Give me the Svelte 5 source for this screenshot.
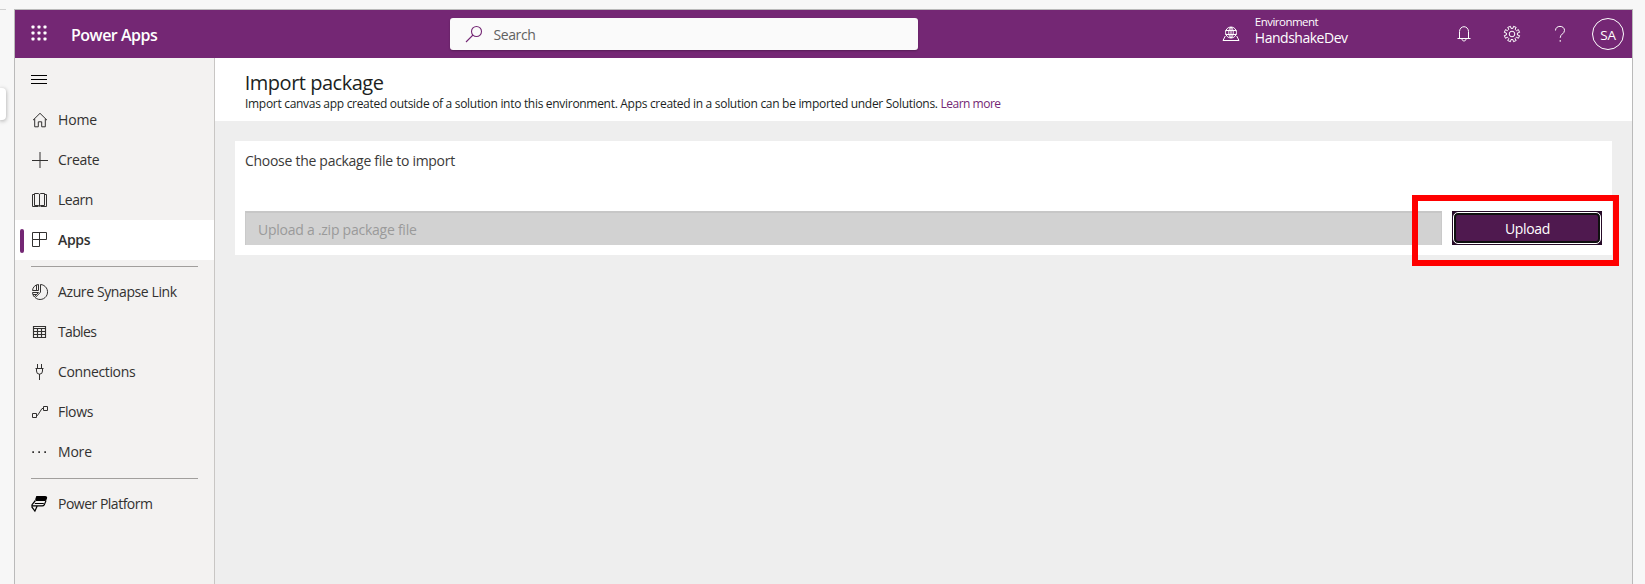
<script>
  const groups = [
    [
      { icon: 'home', label: 'Home', ls: -0.15 },
      { icon: 'plus', label: 'Create', ls: -0.3 },
      { icon: 'book', label: 'Learn', ls: -0.5 },
      { icon: 'apps', label: 'Apps', ls: -0.3, active: true }
    ],
    [
      { icon: 'pie', label: 'Azure Synapse Link', ls: -0.39 },
      { icon: 'table', label: 'Tables', ls: -0.65 },
      { icon: 'plug', label: 'Connections', ls: -0.36 },
      { icon: 'flow', label: 'Flows', ls: -0.35 },
      { icon: 'more', label: 'More', ls: -0.2 }
    ],
    [{ icon: 'platform', label: 'Power Platform', ls: -0.5 }]
  ];
  const dots = [2, 8, 14];
</script>

{#snippet navIcon(name)}
  <svg class="icon" width="18" height="18" viewBox="0 0 18 18">
    {#if name === 'home'}
      <path d="M2 9.2 9 2.3l7 6.9M3.700 7.800v8h3.600v-5h3.400v5h3.600v-8" />
    {:else if name === 'plus'}
      <path d="M9 1v16M1 9.500h16" />
    {:else if name === 'book'}
      <path d="M8.500 4v11M3.500 2.500H7c1 0 1.500.5 1.500 1.500 0-1 .5-1.500 1.500-1.500h3.500v12H10c-1 0-1.500.4-1.500 1 0-.6-.5-1-1.500-1H3.500zM3.500 3.500h-2v12h6M13.500 3.500h2v12h-6" />
    {:else if name === 'apps'}
      <path d="M1.500 1.500h14v7h-14zM8.500 1.500v14h-7v-7" />
    {:else if name === 'pie'}
      <path d="M9.500 1.500a7.500 7.500 0 1 1-5.300 13.200l5.300-5.500zM7.500 1.500v6h-6c.2-3.300 2.800-5.800 6-6zM5.500 2v5.500M1.500 9.500h6l-4.400 4.300a7 7 0 0 1-1.600-4.300zM2 11.500h3.500" />
    {:else if name === 'table'}
      <path class="grid" d="M2.500 3.500h12v11h-12zM2.500 5.500h12M2.500 8.500h12M2.500 11.500h12M6.500 5.500v9M10.500 5.500v9" />
    {:else if name === 'plug'}
      <path d="M6.500 1v4M10.500 1v4M4.500 5.500h8M5.500 5.500V8a3 3.200 0 0 0 6 0V5.500M8.500 11v6" />
    {:else if name === 'flow'}
      <path d="M1.500 10.500h4v4h-4zM12.500 3.500h4v4h-4zM5.500 12.500h1l4.500-7h1.500" />
    {:else if name === 'more'}
      <path class="dots" d="M1.300 8.300h1.700V10H1.300zM7.300 8.300H9V10H7.300zM13.300 8.300H15V10h-1.700z" />
    {:else}
      <path class="fill" d="M5.300 1h8.800c1.700 0 2.500 1 1.900 2.500l-.6 1.600c-.3.800-1 1-1.800 1H6C4.700 6.100 4 5.200 4.300 4z" />
      <path class="thick" d="M4.400 5.500 1.300 9.300c-.8 1-.4 1.600.7 1.600h9.200c1 0 1.700-.5 2.200-1.300l1.600-4M3.800 8.500h9M1 10v2.200l2.900 3.900L6.200 11" />
    {/if}
  </svg>
{/snippet}

<div class="page">
  <div class="left-strip">
    <div class="strip-line"></div>
    <div class="strip-card"></div>
  </div>
  <div class="window">
    <header>
      <svg class="waffle" width="18" height="18" viewBox="0 0 18 18">
        {#each dots as y}
          {#each dots as x}
            <rect x={x - 1.5} y={y - 1.5} width="3" height="3" rx=".8" />
          {/each}
        {/each}
      </svg>
      <div class="brand">Power Apps</div>
      <div class="search">
        <svg width="18" height="18" viewBox="0 0 18 18"><circle cx="11.500" cy="6.500" r="5" /><path d="M8 10 1 17" /></svg>
        <span>Search</span>
      </div>
      <svg class="globe" width="18" height="16" viewBox="0 0 18 16">
        <circle cx="9" cy="6.500" r="5.500" />
        <path d="M3.500 4.500h11M3.500 8.500h11M9 1v11M9 1C6 3.500 6 9.500 9 12M9 1c3 2.500 3 8.500 0 11M3.300 10 1 14.500h16L14.700 10" />
      </svg>
      <div class="env">
        <div class="env-label">Environment</div>
        <div class="env-name">HandshakeDev</div>
      </div>
      <svg class="bell" width="16" height="18" viewBox="0 0 16 18"><path d="M3.500 13.500V6.500a4.500 4.800 0 0 1 9 0v7M1.500 13.500h13M6 14c0 2.600 4 2.600 4 0" /></svg>
      <svg class="gear" width="18" height="18" viewBox="0 0 18 18">
        <path d="m7.500 1.300.5 2.100h2l.5-2.100 2.700 1.100-1.100 1.900 1.400 1.400 1.900-1.100 1.200 2.800-2.200.6v2l2.200.6-1.200 2.700-1.900-1.100-1.400 1.400 1.100 1.900-2.700 1.200-.6-2.200H8l-.5 2.200-2.800-1.200 1.100-1.900-1.400-1.400-1.900 1.100-1.200-2.700L3.400 10V8l-2.100-.6 1.200-2.800 1.900 1.100 1.400-1.400-1.100-1.900z" />
        <circle cx="9" cy="9" r="2.800" />
      </svg>
      <svg class="help" width="12" height="18" viewBox="0 0 12 18"><path d="M1.500 5.500C1.500 2.900 3.400 1.400 6 1.400s4.500 1.600 4.500 4c0 3.500-4.300 3.600-4.300 7.400M6.200 15v1.800" /></svg>
      <div class="avatar">SA</div>
    </header>
    <div class="body">
      <nav>
        <svg class="burger" width="16" height="10" viewBox="0 0 16 10"><path d="M0 .5h16M0 4.500h16M0 8.500h16" /></svg>
        {#each groups as group, i}
          {#if i > 0}<hr />{/if}
          {#each group as item}
            <div class="item" class:active={item.active}>
              {@render navIcon(item.icon)}
              <span style:letter-spacing="{item.ls}px">{item.label}</span>
            </div>
          {/each}
        {/each}
      </nav>
      <main>
        <div class="head">
          <h1>Import package</h1>
          <p>Import canvas app created outside of a solution into this environment. Apps created in a solution can be imported under Solutions. <a href="#learn">Learn more</a></p>
        </div>
        <section>
          <div class="prompt">Choose the package file to import</div>
          <div class="row">
            <div class="file">Upload a .zip package file</div>
            <div class="upload-wrap">
              <button><span>Upload</span></button>
              <div class="highlight"></div>
            </div>
          </div>
        </section>
      </main>
    </div>
  </div>
</div>

<style>
  :global(body) { background: #f7f7f7; overflow: hidden; }
  * { box-sizing: border-box; }
  .page { display: flex; height: 584px; font-family: "Open Sans", "Noto Sans", sans-serif; font-size: 14px; color: #323130; background: #f7f7f7; }
  .left-strip { width: 14px; padding-top: 9px; flex: none; }
  .strip-line { width: 6px; height: 1px; background: #d0d0d0; }
  .strip-card { width: 6px; height: 32px; margin-top: 78px; background: #fff; border-radius: 0 4px 4px 0; box-shadow: 0 1px 4px rgba(0, 0, 0, .35); }
  .window { width: 1619px; height: 575px; margin-top: 9px; border: 1px solid #bababa; border-bottom: 0; display: flex; flex-direction: column; }
  header { height: 48px; flex: none; background: #742774; color: #fff; display: flex; align-items: center; padding-right: 8px; }
  svg { flex: none; fill: none; stroke: currentColor; stroke-width: 1; }
  .waffle { margin-left: 16px; margin-top: 0; fill: #fff; stroke: none; }
  .brand { margin-left: 22px; width: 364px; font-size: 16px; font-weight: 600; letter-spacing: -.5px; padding-top: 1px; }
  .search { width: 468px; height: 32px; margin-left: 15px; border-radius: 3px; background: #fafafa; display: flex; align-items: center; color: #616161; letter-spacing: -.4px; box-shadow: 0 1px 2px rgba(0, 0, 0, .25); }
  .search svg { margin-left: 15px; margin-right: 10.5px; color: #742774; stroke-width: 1.1; }
  .search span { padding-top: 1px; }
  .globe { margin-left: 304px; }
  .env { width: 200px; margin-left: 14px; margin-top: -8px; padding-left: .8px; }
  .env-label { font-size: 11.5px; line-height: 16px; letter-spacing: -.52px; }
  .env-name { font-size: 14px; line-height: 16px; letter-spacing: -.48px; }
  .bell { margin-left: 2px; }
  .gear { margin-left: 31px; }
  .help { margin-left: 33px; }
  .avatar { width: 32px; height: 32px; margin-left: auto; border: 1px solid #fff; border-radius: 50%; text-align: center; line-height: 33px; letter-spacing: -.3px; font-size: 13.5px; }
  .body { flex: 1; display: flex; }
  nav { width: 200px; flex: none; background: #f3f2f1; border-right: 1px solid #c8c6c4; }
  .burger { display: block; margin: 17px 0 15px 16px; color: #000; }
  .item { height: 40px; display: flex; align-items: center; padding-left: 16px; position: relative; }
  .item span { margin-left: 9px; padding-bottom: 2px; }
  .item .icon { color: #323130; }
  .active { background: #fff; font-weight: 600; }
  .active::before { content: ''; position: absolute; left: 5px; top: 9px; width: 4px; height: 24px; border-radius: 2px; background: #742774; }
  hr { height: 1px; border: 0; background: #a19f9d; margin: 6px 16px 5px; }
  .dots, .fill { fill: currentColor; stroke: none; }
  .fill { fill: #000; }
  .grid { stroke-width: 1.15; }
  .thick { stroke: #000; stroke-width: 1.2; }
  main { flex: 1; background: #eee; }
  .head { height: 63px; background: #fff; padding: 12px 30px 0 29px; }
  h1 { margin: 0; padding-left: .7px; font-size: 20px; line-height: 26px; font-weight: 400; letter-spacing: -.48px; color: #201f1e; }
  p { margin: 0; padding-left: 1px; font-size: 12px; line-height: 16px; letter-spacing: -.302px; color: #201f1e; white-space: nowrap; }
  a { color: #742774; text-decoration: none; letter-spacing: -.5px; }
  section { height: 114px; margin: 20px 20px 0; background: #fff; padding: 10px; }
  .prompt { height: 60px; line-height: 20px; color: #3b3a39; letter-spacing: -.285px; }
  .row { display: flex; gap: 10px; }
  .file { flex: 1; height: 34px; background: #d2d2d2; border: 1px solid #cacaca; border-top: 2px solid #c7c7c7; border-bottom: 0; padding-left: 12px; line-height: 33px; color: #9a9a9a; letter-spacing: -.25px; }
  .upload-wrap { width: 150px; height: 34px; position: relative; }
  button { width: 150px; height: 34px; padding: 1px; border: 1px solid #260b28; background: #260b28; color: #fff; font: inherit; display: block; }
  button span { display: block; height: 30px; line-height: 27px; border-radius: 4px; background: #4f194f; border: 2px solid #101010; outline: 1px solid #fff; outline-offset: 0; letter-spacing: -.35px; padding-left: 1px; }
  .highlight { position: absolute; left: -40px; top: -16px; width: 207px; height: 71px; border: 6px solid #f00; z-index: 1; }
</style>
